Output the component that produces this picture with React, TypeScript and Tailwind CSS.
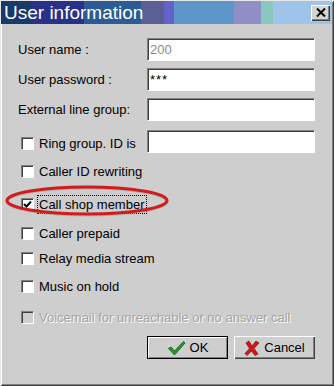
import * as React from "react";

const font = { fontFamily: '"Liberation Sans", Arial, sans-serif' };

function Field({ value, muted }: { value?: string; muted?: boolean }) {
  return (
    <div className="flex h-[23px] w-[168px] items-center border border-t-[#808080] border-l-[#808080] border-b-white border-r-white bg-white pl-[2px] shadow-[inset_1px_1px_0_#404040]">
      {value && (
        <span className={muted ? "text-[13px] leading-none text-[#8a8a8a]" : "text-[13px] leading-none tracking-[1px] text-black"}>
          {value}
        </span>
      )}
    </div>
  );
}

function Box({ checked, disabled }: { checked?: boolean; disabled?: boolean }) {
  return (
    <div
      className={
        "flex h-[13px] w-[13px] shrink-0 items-center justify-center border border-t-[#808080] border-l-[#808080] border-b-white border-r-white shadow-[inset_1px_1px_0_#404040] " +
        (disabled ? "bg-[#cecece]" : "bg-white")
      }
    >
      {checked && (
        <svg width="9" height="9" viewBox="0 0 9 9">
          <path d="M1 4 L3.5 6.5 L8 1.5" fill="none" stroke="#000" strokeWidth="2" />
        </svg>
      )}
    </div>
  );
}

function CheckRow({ label, checked, disabled, focused, className }: { label: string; checked?: boolean; disabled?: boolean; focused?: boolean; className?: string }) {
  return (
    <div className={"flex h-[13px] items-center gap-[3px] pl-[20px] " + (className ?? "")}>
      <Box checked={checked} disabled={disabled} />
      <span
        className={
          "text-[13px] leading-none " +
          (disabled ? "text-[#a3a3a3] [text-shadow:1px_1px_0_#fff]" : "text-black") +
          (focused ? " border border-dotted border-black px-[1px] py-[2px]" : " px-[2px]")
        }
      >
        {label}
      </span>
    </div>
  );
}

function Btn({ children, isDefault }: { children: React.ReactNode; isDefault?: boolean }) {
  return (
    <div
      className={
        "flex h-[23px] w-[81px] items-center justify-center gap-[4px] bg-[#cecece] text-[13px] text-black " +
        (isDefault
          ? "border border-black shadow-[inset_1px_1px_0_#fff,inset_-1px_-1px_0_#808080]"
          : "shadow-[inset_1px_1px_0_#fff,inset_-1px_-1px_0_#404040,inset_-2px_-2px_0_#808080]")
      }
    >
      {children}
    </div>
  );
}

export default function App() {
  return (
    <div
      className="relative flex h-[386px] w-[334px] flex-col bg-[#cecece] pl-[1px] pr-[2px] pt-[1px] shadow-[inset_1px_1px_0_#e8e8e8,inset_-1px_-1px_0_#404040,inset_2px_2px_0_#fff,inset_-2px_-2px_0_#808080]"
      style={font}
    >
      <div className="flex h-[23px] items-center justify-between bg-[linear-gradient(90deg,#17396b_0px,#17396b_30px,#28308a_30px,#28308a_83px,#2c5c95_83px,#2c5c95_140px,#5b5f94_140px,#5b5f94_163px,#6262c8_163px,#6262c8_173px,#5f96c9_173px,#5f96c9_233px,#8f8fc6_233px,#8f8fc6_260px,#88c8c0_260px,#88c8c0_272px,#9ec4e9_272px)] pl-[3px] pr-[2px]">
        <span className="text-[19px] leading-none text-white">User information</span>
        <div className="flex h-[16px] w-[19px] items-center justify-center bg-[#d4d4d4] shadow-[inset_1px_1px_0_#fff,inset_-1px_-1px_0_#404040,inset_-2px_-2px_0_#808080]">
          <svg width="10" height="9" viewBox="0 0 10 9">
            <path d="M1 0.5 L9 8.5 M9 0.5 L1 8.5" stroke="#000" strokeWidth="2" />
          </svg>
        </div>
      </div>

      <div className="flex flex-col">
        <div className="mt-[14px] flex items-center justify-between pl-[17px] pr-[17px]">
          <span className="text-[13px] leading-none text-black">User name :</span>
          <Field value="200" muted />
        </div>
        <div className="mt-[7px] flex items-center justify-between pl-[17px] pr-[17px]">
          <span className="text-[13px] leading-none text-black">User password :</span>
          <Field value="***" />
        </div>
        <div className="mt-[7px] flex items-center justify-between pl-[17px] pr-[17px]">
          <span className="text-[13px] leading-none text-black">External line group:</span>
          <Field />
        </div>
        <div className="mt-[9px] flex items-center justify-between pr-[17px]">
          <CheckRow label="Ring group. ID is" className="mt-[3px]" />
          <Field />
        </div>
        <CheckRow label="Caller ID rewriting" className="mt-[12px]" />
        <CheckRow label="Call shop member" checked focused className="mt-[20px]" />
        <CheckRow label="Caller prepaid" className="mt-[16px]" />
        <CheckRow label="Relay media stream" className="mt-[12px]" />
        <CheckRow label="Music on hold" className="mt-[15px]" />
        <CheckRow label="Voicemail for unreachable or no answer call" disabled className="mt-[18px]" />

        <div className="mt-[12px] flex justify-end gap-[6px] pr-[17px]">
          <Btn isDefault>
            <svg width="19" height="16" viewBox="0 0 19 16">
              <path d="M1.5 8.5 L4 7 L7.5 11 L16.5 1.5 L18 3 L7.5 15 Z" fill="#1f9a2a" stroke="#0c5c14" strokeWidth="0.8" />
            </svg>
            <span className="leading-none">OK</span>
          </Btn>
          <Btn>
            <svg width="16" height="16" viewBox="0 0 16 16">
              <path d="M2 3 L5 1 L8 6 L12 1 L15 3 L10 8.5 L14 14 L11 15.5 L7.5 11 L3 15.5 L1 13.5 L5.5 8.5 Z" fill="#d01818" stroke="#7a0a0a" strokeWidth="0.7" />
            </svg>
            <span className="leading-none">Cancel</span>
          </Btn>
        </div>
      </div>

      <svg className="pointer-events-none absolute left-[4px] top-[185px]" width="166" height="32" viewBox="0 0 166 32">
        <ellipse cx="83" cy="16.5" rx="80" ry="13.5" fill="none" stroke="#9a9a9a" strokeWidth="3" opacity="0.5" />
        <ellipse cx="83" cy="15.5" rx="80" ry="13.5" fill="none" stroke="#d01c1c" strokeWidth="3" />
      </svg>
    </div>
  );
}
